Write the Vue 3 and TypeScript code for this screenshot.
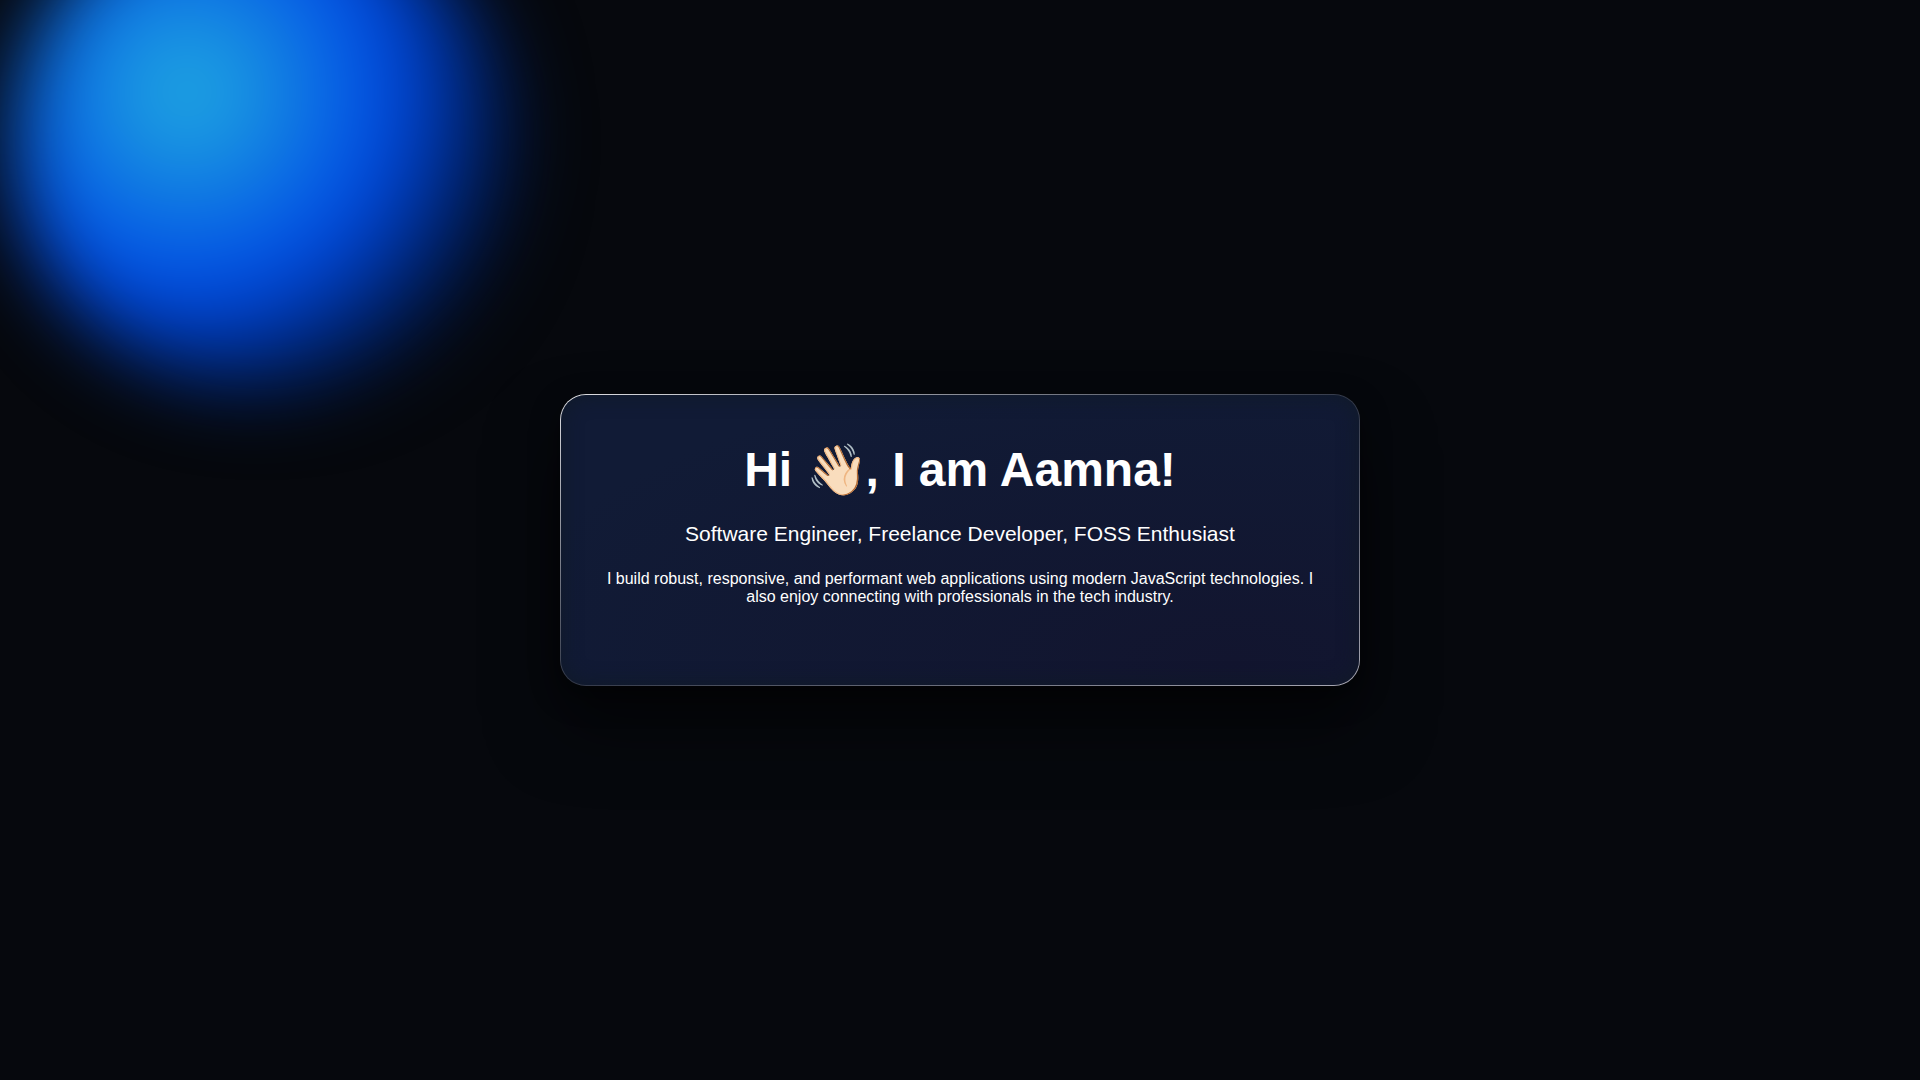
<script setup lang="ts">
const name = 'Aamna'
const role = 'Software Engineer, Freelance Developer, FOSS Enthusiast'
const bio =
  'I build robust, responsive, and performant web applications using modern JavaScript technologies. I also enjoy connecting with professionals in the tech industry.'
</script>

<template>
  <main class="page">
    <div class="glow" aria-hidden="true"></div>
    <section class="card">
      <h1 class="title">Hi <span class="wave">👋🏻</span>, I am {{ name }}!</h1>
      <p class="role">{{ role }}</p>
      <p class="bio">{{ bio }}</p>
    </section>
  </main>
</template>

<style>
body {
  margin: 0;
  background: #06080d;
}
</style>

<style scoped>
.page {
  position: relative;
  display: flex;
  align-items: center;
  justify-content: center;
  box-sizing: border-box;
  min-height: 100vh;
  padding: 24px;
  overflow: hidden;
  color: #fff;
  font-family: "Liberation Sans", Arial, sans-serif;
  text-align: center;
}

.glow {
  position: absolute;
  top: -108px;
  left: 12px;
  width: 500px;
  height: 500px;
  border-radius: 50%;
  background: radial-gradient(circle at 35% 40%, #22b0e0 0, #004ae6 200px, #00040e 364px);
  filter: blur(38px);
}

.card {
  position: relative;
  box-sizing: border-box;
  width: 100%;
  max-width: 800px;
  padding: 40px 40px 79px;
  border: 1px solid transparent;
  border-radius: 26px;
  background:
    radial-gradient(ellipse at 84% 92%, #12152f 0, #111b36 80%) padding-box,
    linear-gradient(to bottom right, #e0e0e4 0%, #323848 50%, #a8a8b4 100%) border-box;
  box-shadow:
    0 40px 70px rgba(0, 0, 0, 0.5),
    0 10px 30px rgba(0, 0, 0, 0.4),
    inset 0 0 20px rgba(16, 26, 36, 0.8);
}

.title {
  margin: 7px 0 0;
  font-size: 48px;
  line-height: 56px;
}

.wave {
  margin-right: -2px;
  font-size: 50px;
  line-height: 48px;
  vertical-align: -1px;
}

.role {
  margin: 24px 0 0;
  font-size: 21px;
  line-height: 24px;
}

.bio {
  margin: 24px 0 0;
  font-size: 16px;
  line-height: 18px;
}
</style>
